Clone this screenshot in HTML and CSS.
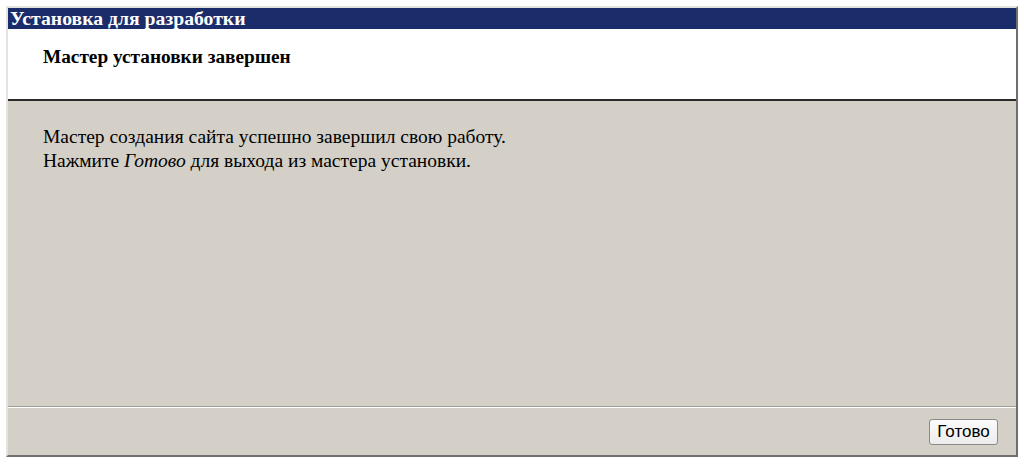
FILE: index.html
```html
<!DOCTYPE html>
<html lang="ru">
<head>
<meta charset="utf-8">
<title>Установка для разработки</title>
<link rel="stylesheet" href="styles.css">
</head>
<body>
<div class="window">
  <div class="titlebar">Установка для разработки</div>
  <div class="header">
    <h1 class="header-title">Мастер установки завершен</h1>
  </div>
  <div class="content">
    <p class="message">Мастер создания сайта успешно завершил свою работу.<br>Нажмите <i>Готово</i> для выхода из мастера установки.</p>
  </div>
  <div class="footer">
    <button class="btn" type="button">Готово</button>
  </div>
</div>
</body>
</html>
```

FILE: styles.css
```css
html, body {
  margin: 0;
  padding: 0;
  background: #ffffff;
}
body {
  font-family: "Liberation Serif", "Times New Roman", serif;
}
.window {
  margin: 6px 0 0 6px;
  width: 1012px;
  height: 451px;
  box-sizing: border-box;
  border: 2px solid;
  border-color: #e4e2dc #6f6f6f #6f6f6f #e4e2dc;
  background: #d4d0c8;
  display: flex;
  flex-direction: column;
}
.titlebar {
  height: 21px;
  line-height: 21px;
  background: #1b2c6b;
  color: #ffffff;
  font-weight: bold;
  font-size: 19.7px;
  padding-left: 2px;
  white-space: nowrap;
  overflow: hidden;
}
.header {
  height: 70px;
  background: #ffffff;
  border-bottom: 2px solid #2a2a2a;
  box-sizing: content-box;
  padding-left: 35px;
}
.header-title {
  margin: 0;
  padding-top: 17px;
  font-size: 19.3px;
  line-height: 22px;
  font-weight: bold;
  color: #000;
}
.content {
  flex: 1;
  padding: 24px 0 0 35px;
}
.message {
  margin: 0;
  font-size: 19.5px;
  line-height: 24px;
  color: #000;
}
.footer {
  height: 48px;
  border-top: 1px solid #a3a09a;
  box-shadow: inset 0 1px 0 #ffffff;
  display: flex;
  align-items: center;
  justify-content: flex-end;
  padding-right: 18px;
  box-sizing: content-box;
}
.btn {
  width: 69px;
  height: 26px;
  font-family: "Liberation Sans", Arial, sans-serif;
  font-size: 17px;
  color: #000;
  background: linear-gradient(#fbfbfb, #ececec);
  border: 1px solid #8a8a8a;
  border-radius: 3px;
  padding: 0;
  margin-top: 1px;
}
```
